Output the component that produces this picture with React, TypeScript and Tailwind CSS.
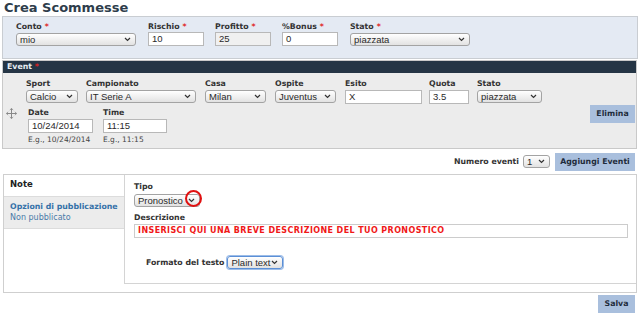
import React from "react";

const Chevron = () => (
  <svg width="7" height="5" viewBox="0 0 7 5" className="shrink-0">
    <path d="M1 1 L3.5 3.5 L6 1" fill="none" stroke="#333" strokeWidth="1.2" />
  </svg>
);

function Select({ value, className = "", focus = false }: { value: string; className?: string; focus?: boolean }) {
  return (
    <div
      className={`flex items-center justify-between h-[13px] rounded-[3px] border ${
        focus ? "border-[#5b8fd6] ring-1 ring-[#9dbde8]" : "border-[#a3a3a3]"
      } bg-gradient-to-b from-white to-[#e2e2e2] pl-[3px] pr-[4px] font-['Liberation_Sans',sans-serif] text-[9.5px] leading-none whitespace-nowrap text-[#2a2a2a] ${className}`}
    >
      <span>{value}</span>
      <Chevron />
    </div>
  );
}

function Input({ value, className = "", readOnly = false }: { value: string; className?: string; readOnly?: boolean }) {
  return (
    <div
      className={`flex items-center h-[14px] border border-[#b8b8b8] px-[3px] font-['Liberation_Sans',sans-serif] text-[9.5px] leading-none text-[#2a2a2a] ${
        readOnly ? "bg-[#f0f0f0]" : "bg-white"
      } ${className}`}
    >
      {value}
    </div>
  );
}

function Label({ text, req = false }: { text: string; req?: boolean }) {
  return (
    <div className="h-[11px] text-[7.8px] font-bold leading-[10px] whitespace-nowrap text-[#333]">
      {text}
      {req && <span className="text-[#e02020] ml-[3px]">*</span>}
    </div>
  );
}

function Btn({ text, className = "" }: { text: string; className?: string }) {
  return (
    <div
      className={`flex items-center justify-center h-[18px] bg-[#a9bfdd] px-[5px] text-[7.8px] font-bold whitespace-nowrap text-[#1f2c3b] ${className}`}
    >
      {text}
    </div>
  );
}

export default function App() {
  return (
    <div className="w-[640px] h-[315px] overflow-hidden bg-white font-['DejaVu_Sans',sans-serif] text-[#333]">
      {/* Title */}
      <h1 className="pl-[4px] h-[16px] text-[13px] font-bold leading-[15px] text-[#2e3d4b]">
        Crea Scommesse
      </h1>

      {/* Top fieldset */}
      <div className="mx-[2px] h-[43px] border border-[#c9cdd2] bg-[#e4eaf3] pl-[13px] pt-[5px] flex">
        <div className="w-[120px] mr-[12px]">
          <Label text="Conto" req />
          <Select value="mio" className="w-[120px]" />
        </div>
        <div className="w-[56px] mr-[11px]">
          <Label text="Rischio" req />
          <Input value="10" className="w-[56px] -mt-px" />
        </div>
        <div className="w-[56px] mr-[11px]">
          <Label text="Profitto" req />
          <Input value="25" readOnly className="w-[56px] -mt-px" />
        </div>
        <div className="w-[56px] mr-[12px]">
          <Label text="%Bonus" req />
          <Input value="0" className="w-[56px] -mt-px" />
        </div>
        <div className="w-[120px]">
          <Label text="Stato" req />
          <Select value="piazzata" className="w-[120px]" />
        </div>
      </div>

      {/* Event */}
      <div className="mx-[2px] mt-[1px] w-[635px] border border-[#c9c9c9] bg-[#ececec]">
        <div className="h-[12px] bg-[#253545] pl-[4px] text-[7.8px] font-bold leading-[12px] text-[#e8edf2]">
          Event <span className="text-[#e02020]">*</span>
        </div>
        <div className="flex">
          <div className="flex-1">
            <div className="flex pl-[23px] pt-[6px]">
              <div className="mr-[8px]">
                <Label text="Sport" />
                <Select value="Calcio" className="w-[52px]" />
              </div>
              <div className="mr-[9px]">
                <Label text="Campionato" />
                <Select value="IT Serie A" className="w-[110px]" />
              </div>
              <div className="mr-[9px]">
                <Label text="Casa" />
                <Select value="Milan" className="w-[61px]" />
              </div>
              <div className="mr-[9px]">
                <Label text="Ospite" />
                <Select value="Juventus" className="w-[61px]" />
              </div>
              <div className="mr-[7px]">
                <Label text="Esito" />
                <Input value="X" className="w-[77px]" />
              </div>
              <div className="mr-[8px]">
                <Label text="Quota" />
                <Input value="3.5" className="w-[40px]" />
              </div>
              <div>
                <Label text="Stato" />
                <Select value="piazzata" className="w-[65px]" />
              </div>
            </div>
            <div className="flex items-start pt-[4px] pb-[4px]">
              <svg width="11" height="11" viewBox="0 0 11 11" className="ml-[3px] mt-[0px] mr-[11px]">
                <path d="M5.5 0.5 V10.5 M0.5 5.5 H10.5" stroke="#888" strokeWidth="1" />
                <path d="M3.8 2 L5.5 0.5 L7.2 2 M3.8 9 L5.5 10.5 L7.2 9 M2 3.8 L0.5 5.5 L2 7.2 M9 3.8 L10.5 5.5 L9 7.2" fill="none" stroke="#888" strokeWidth="0.8" />
              </svg>
              <div className="mr-[10px]">
                <Label text="Date" />
                <Input value="10/24/2014" className="w-[65px]" />
                <div className="mt-[3px] text-[7.5px] leading-[8px] whitespace-nowrap text-[#444]">E.g., 10/24/2014</div>
              </div>
              <div>
                <Label text="Time" />
                <Input value="11:15" className="w-[64px]" />
                <div className="mt-[3px] text-[7.5px] leading-[8px] whitespace-nowrap text-[#444]">E.g., 11:15</div>
              </div>
            </div>
          </div>
          <div className="pt-[32px] pr-[1px]">
            <Btn text="Elimina" className="w-[45px]" />
          </div>
        </div>
      </div>

      {/* Numero eventi */}
      <div className="flex items-center justify-end h-[22px] pr-[5px] pt-[3px]">
        <span className="text-[7.8px] font-bold text-[#333] mr-[4px]">Numero eventi</span>
        <Select value="1" className="w-[27px] mr-[5px]" />
        <Btn text="Aggiungi Eventi" className="w-[80px]" />
      </div>

      {/* Vertical tabs */}
      <div className="mx-[3px] mt-[3px] h-[119px] w-[634px] border border-[#cfcfcf] flex">
        <div className="w-[120px] shrink-0 pt-[1px]">
          <div className="h-[20px] pl-[6px] text-[8.5px] font-bold leading-[17px] text-[#222]">Note</div>
          <div className="h-[33px] bg-[#ececec] border-y border-[#dcdcdc] pl-[6px] pt-[5px]">
            <div className="text-[7.8px] font-bold leading-[10px] whitespace-nowrap text-[#3571a8]">Opzioni di pubblicazione</div>
            <div className="text-[8px] leading-[12px] text-[#4a7aa8]">Non pubblicato</div>
          </div>
        </div>
        <div className="flex-1 self-start h-[109px] border-l border-b border-[#d4d4d4] pl-[9px] pt-[7px]">
          <Label text="Tipo" />
          <div className="relative w-[66px] mt-[1px]">
            <Select value="Pronostico" className="w-[66px]" />
            <div className="absolute left-[51px] top-[-4px] w-[17px] h-[17px] rounded-full border-2 border-[#e01010]" />
          </div>
          <div className="mt-[6px]">
            <Label text="Descrizione" />
          </div>
          <div className="w-[494px] h-[14px] border border-[#cccccc] pl-[3px] text-[8px] font-bold leading-[12px] whitespace-nowrap text-[#f01818] tracking-[0.4px]">
            INSERISCI QUI UNA BREVE DESCRIZIONE DEL TUO PRONOSTICO
          </div>
          <div className="flex items-center pl-[12px] mt-[18px]">
            <span className="text-[7.8px] font-bold text-[#333] mr-[3px]">Formato del testo</span>
            <Select value="Plain text" focus className="w-[56px]" />
          </div>
        </div>
      </div>

      {/* Salva */}
      <div className="flex justify-end pr-[5px] mt-[2px]">
        <Btn text="Salva" className="w-[37px]" />
      </div>
    </div>
  );
}
